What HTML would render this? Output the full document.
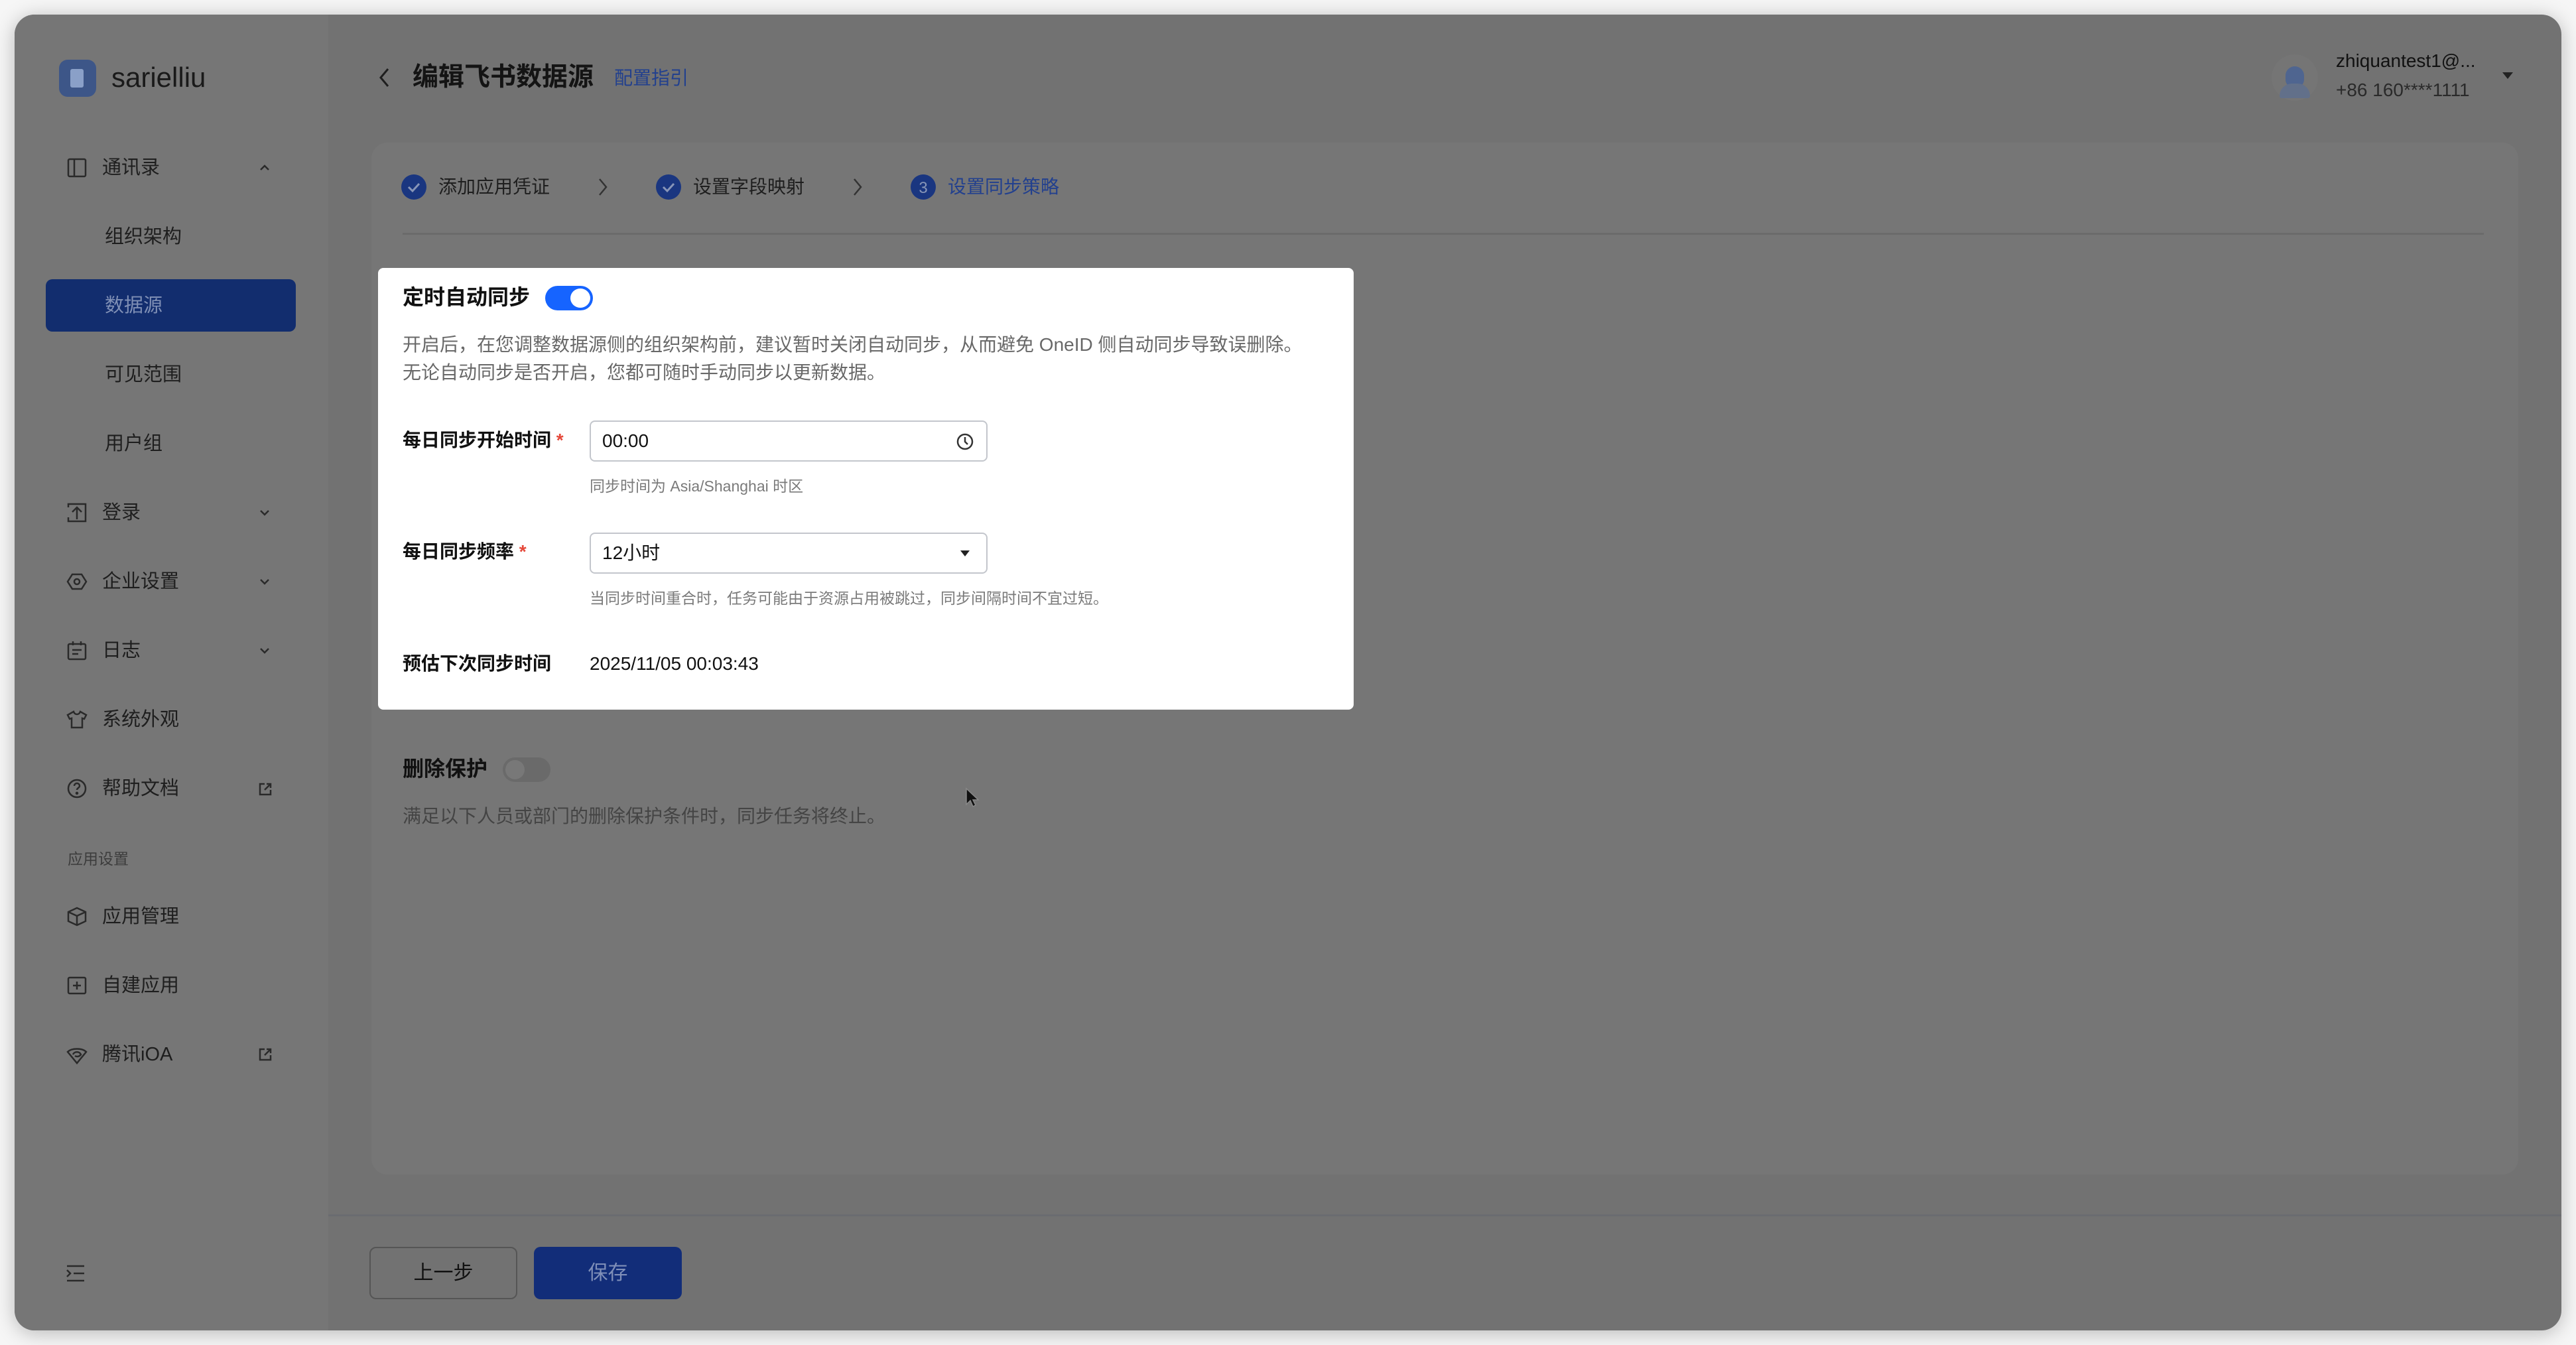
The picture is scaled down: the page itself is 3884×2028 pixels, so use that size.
<!DOCTYPE html>
<html><head><meta charset="utf-8"><style>
*{margin:0;padding:0;box-sizing:border-box}
body{width:3884px;height:2028px;background:#f6f6f6;font-family:"Liberation Sans","Noto Sans CJK SC",sans-serif;position:relative;overflow:hidden}
.a{position:absolute;white-space:nowrap}
.win{position:absolute;left:22px;top:22px;width:3840px;height:1984px;border-radius:30px;background:#727272;overflow:hidden;box-shadow:0 4px 30px rgba(0,0,0,.25)}
.side{position:absolute;left:22px;top:22px;width:473px;height:1984px;background:#767676;border-radius:30px 0 0 30px}
.mi{position:absolute;font-size:29px;color:#1e1e1e;line-height:40px;height:40px}
.ic{position:absolute}
.t28{font-size:28px;line-height:40px;height:40px}
</style></head><body>
<div class="win"></div>
<div class="side"></div>

<!-- logo -->
<div class="a" style="left:89px;top:90px;width:56px;height:56px;border-radius:13px;background:#3d5688"></div>
<div class="a" style="left:106px;top:104px;width:20px;height:28px;background:#8aa0c8;border-radius:3px"></div>
<div class="a" style="left:168px;top:93px;font-size:42px;line-height:48px;color:#1a1a1a">sarielliu</div>

<!-- menu -->
<svg class="ic" style="left:100px;top:237px" width="32" height="32" viewBox="0 0 32 32" fill="none" stroke="#2a2a2a" stroke-width="2.5"><rect x="3" y="3" width="26" height="26" rx="2"/><path d="M12 3v26"/></svg>
<div class="mi" style="left:154px;top:233px">通讯录</div>
<svg class="ic" style="left:389px;top:243px" width="20" height="20" viewBox="0 0 20 20" fill="none" stroke="#2a2a2a" stroke-width="2.5"><path d="M4 13l6-6 6 6"/></svg>
<div class="mi" style="left:158px;top:337px">组织架构</div>
<div class="a" style="left:69px;top:421px;width:377px;height:79px;background:#122d6e;border-radius:10px"></div>
<div class="mi" style="left:158px;top:441px;color:#7f8fb5">数据源</div>
<div class="mi" style="left:158px;top:545px">可见范围</div>
<div class="mi" style="left:158px;top:649px">用户组</div>

<svg class="ic" style="left:100px;top:757px" width="32" height="32" viewBox="0 0 32 32" fill="none" stroke="#2a2a2a" stroke-width="2.5"><path d="M3 8V3h26v26H3v-6M16 26V9M9 15l7-7 7 7"/></svg>
<div class="mi" style="left:154px;top:753px">登录</div>
<svg class="ic" style="left:389px;top:763px" width="20" height="20" viewBox="0 0 20 20" fill="none" stroke="#2a2a2a" stroke-width="2.5"><path d="M4 7l6 6 6-6"/></svg>

<svg class="ic" style="left:100px;top:861px" width="32" height="32" viewBox="0 0 32 32" fill="none" stroke="#2a2a2a" stroke-width="2.5"><path d="M9 5h14l7 11-7 11H9L2 16z"/><circle cx="16" cy="16" r="4"/></svg>
<div class="mi" style="left:154px;top:857px">企业设置</div>
<svg class="ic" style="left:389px;top:867px" width="20" height="20" viewBox="0 0 20 20" fill="none" stroke="#2a2a2a" stroke-width="2.5"><path d="M4 7l6 6 6-6"/></svg>

<svg class="ic" style="left:100px;top:965px" width="32" height="32" viewBox="0 0 32 32" fill="none" stroke="#2a2a2a" stroke-width="2.5"><rect x="3" y="6" width="26" height="23" rx="2"/><path d="M10 2v6M22 2v6M9 15h14M9 21h9"/></svg>
<div class="mi" style="left:154px;top:961px">日志</div>
<svg class="ic" style="left:389px;top:971px" width="20" height="20" viewBox="0 0 20 20" fill="none" stroke="#2a2a2a" stroke-width="2.5"><path d="M4 7l6 6 6-6"/></svg>

<svg class="ic" style="left:100px;top:1069px" width="32" height="32" viewBox="0 0 32 32" fill="none" stroke="#2a2a2a" stroke-width="2.5"><path d="M11 4L2 9l3 6 3-1v14h16V14l3 1 3-6-9-5c-1 3-3 4-5 4s-4-1-5-4z"/></svg>
<div class="mi" style="left:154px;top:1065px">系统外观</div>

<svg class="ic" style="left:100px;top:1173px" width="32" height="32" viewBox="0 0 32 32" fill="none" stroke="#2a2a2a" stroke-width="2.5"><circle cx="16" cy="16" r="13"/><path d="M12 12a4 4 0 118 0c0 3-4 3-4 6"/><circle cx="16" cy="23" r="1" fill="#2a2a2a"/></svg>
<div class="mi" style="left:154px;top:1169px">帮助文档</div>
<svg class="ic" style="left:389px;top:1179px" width="22" height="22" viewBox="0 0 22 22" fill="none" stroke="#2a2a2a" stroke-width="2.5"><path d="M10 3H3v16h16v-7M13 3h6v6M19 3l-9 9"/></svg>

<div class="a" style="left:102px;top:1280px;font-size:23px;line-height:30px;color:#3c3c3c">应用设置</div>

<svg class="ic" style="left:100px;top:1366px" width="32" height="32" viewBox="0 0 32 32" fill="none" stroke="#2a2a2a" stroke-width="2.5"><path d="M16 3l13 6v14l-13 6-13-6V9zM3 9l13 6 13-6M16 15v14"/></svg>
<div class="mi" style="left:154px;top:1362px">应用管理</div>

<svg class="ic" style="left:100px;top:1470px" width="32" height="32" viewBox="0 0 32 32" fill="none" stroke="#2a2a2a" stroke-width="2.5"><rect x="3" y="4" width="26" height="24" rx="2"/><path d="M16 10v12M10 16h12"/></svg>
<div class="mi" style="left:154px;top:1466px">自建应用</div>

<svg class="ic" style="left:100px;top:1574px" width="32" height="32" viewBox="0 0 32 32" fill="none" stroke="#2a2a2a" stroke-width="2.5"><path d="M2 12c6-6 22-6 28 0l-14 17z"/><path d="M10 16c2-5 10-5 12 0-2 3-6 4-9 2"/></svg>
<div class="mi" style="left:154px;top:1570px">腾讯iOA</div>
<svg class="ic" style="left:389px;top:1579px" width="22" height="22" viewBox="0 0 22 22" fill="none" stroke="#2a2a2a" stroke-width="2.5"><path d="M10 3H3v16h16v-7M13 3h6v6M19 3l-9 9"/></svg>

<svg class="ic" style="left:99px;top:1906px" width="30" height="28" viewBox="0 0 30 28" fill="none" stroke="#2a2a2a" stroke-width="2.5"><path d="M2 3h26M12 14h16M2 25h26M2 9l5 5-5 5"/></svg>

<!-- header -->
<svg class="ic" style="left:568px;top:100px" width="24" height="34" viewBox="0 0 24 34" fill="none" stroke="#1e1e1e" stroke-width="3"><path d="M17 4L6 17l11 13"/></svg>
<div class="a" style="left:622px;top:93px;font-size:39px;line-height:48px;font-weight:bold;color:#141414">编辑飞书数据源</div>
<div class="a" style="left:926px;top:99px;font-size:28px;line-height:38px;color:#22408e">配置指引</div>

<div class="a" style="left:3425px;top:82px;width:70px;height:70px;border-radius:50%;background:#757575"></div>
<div class="a" style="left:3446px;top:100px;width:28px;height:32px;border-radius:14px 14px 12px 12px;background:#4f6590"></div>
<div class="a" style="left:3437px;top:126px;width:46px;height:22px;border-radius:23px 23px 4px 4px;background:#62708a"></div>
<div class="a" style="left:3522px;top:74px;font-size:28px;line-height:36px;color:#111">zhiquantest1@...</div>
<div class="a" style="left:3522px;top:118px;font-size:28px;line-height:36px;color:#2a2a2a">+86 160****1111</div>
<svg class="ic" style="left:3772px;top:108px" width="18" height="12" viewBox="0 0 18 12"><path d="M1 1h16L9 11z" fill="#222"/></svg>

<!-- content card -->
<div class="a" style="left:560px;top:215px;width:3237px;height:1556px;background:#767676;border-radius:24px"></div>

<!-- steps -->
<svg class="ic" style="left:605px;top:263px" width="38" height="38" viewBox="0 0 38 38"><circle cx="19" cy="19" r="19" fill="#1a3680"/><path d="M11 19l6 6 10-11" fill="none" stroke="#8896b8" stroke-width="3"/></svg>
<div class="a t28" style="left:661px;top:262px;color:#1e1e1e">添加应用凭证</div>
<svg class="ic" style="left:899px;top:266px" width="20" height="32" viewBox="0 0 20 32" fill="none" stroke="#333" stroke-width="2.5"><path d="M5 4l10 12-10 12"/></svg>
<svg class="ic" style="left:989px;top:263px" width="38" height="38" viewBox="0 0 38 38"><circle cx="19" cy="19" r="19" fill="#1a3680"/><path d="M11 19l6 6 10-11" fill="none" stroke="#8896b8" stroke-width="3"/></svg>
<div class="a t28" style="left:1045px;top:262px;color:#1e1e1e">设置字段映射</div>
<svg class="ic" style="left:1283px;top:266px" width="20" height="32" viewBox="0 0 20 32" fill="none" stroke="#333" stroke-width="2.5"><path d="M5 4l10 12-10 12"/></svg>
<svg class="ic" style="left:1373px;top:263px" width="38" height="38" viewBox="0 0 38 38"><circle cx="19" cy="19" r="19" fill="#1a3680"/><text x="19" y="28" font-size="24" text-anchor="middle" fill="#8896b8" font-family="Liberation Sans">3</text></svg>
<div class="a t28" style="left:1429px;top:262px;color:#22408e">设置同步策略</div>
<div class="a" style="left:607px;top:351px;width:3138px;height:3px;background:#6b6b6b"></div>

<!-- modal -->
<div class="a" style="left:570px;top:404px;width:1471px;height:666px;background:#fff;border-radius:8px"></div>
<div class="a" style="left:607px;top:428px;font-size:32px;line-height:40px;font-weight:bold;color:#111">定时自动同步</div>
<div class="a" style="left:822px;top:431px;width:72px;height:37px;border-radius:19px;background:#1664ff"></div>
<div class="a" style="left:860px;top:435px;width:30px;height:29px;border-radius:50%;background:#fff"></div>
<div class="a t28" style="left:607px;top:500px;color:#686868">开启后，在您调整数据源侧的组织架构前，建议暂时关闭自动同步，从而避免 OneID 侧自动同步导致误删除。</div>
<div class="a t28" style="left:607px;top:542px;color:#686868">无论自动同步是否开启，您都可随时手动同步以更新数据。</div>

<div class="a t28" style="left:607px;top:644px;font-weight:bold;color:#111">每日同步开始时间 <span style="color:#e5483a">*</span></div>
<div class="a" style="left:889px;top:634px;width:600px;height:62px;border:2px solid #c3c6cc;border-radius:8px"></div>
<div class="a t28" style="left:908px;top:645px;color:#111">00:00</div>
<svg class="ic" style="left:1441px;top:652px" width="28" height="28" viewBox="0 0 28 28" fill="none" stroke="#333" stroke-width="2.5"><circle cx="14" cy="14" r="11"/><path d="M14 7v7l4 4"/></svg>
<div class="a" style="left:889px;top:718px;font-size:23px;line-height:30px;color:#7a7a7a">同步时间为 Asia/Shanghai 时区</div>

<div class="a t28" style="left:607px;top:812px;font-weight:bold;color:#111">每日同步频率 <span style="color:#e5483a">*</span></div>
<div class="a" style="left:889px;top:803px;width:600px;height:62px;border:2px solid #c3c6cc;border-radius:8px"></div>
<div class="a t28" style="left:908px;top:814px;color:#111">12小时</div>
<svg class="ic" style="left:1447px;top:829px" width="16" height="11" viewBox="0 0 16 11"><path d="M1 1h14L8 10z" fill="#222"/></svg>
<div class="a" style="left:889px;top:887px;font-size:23px;line-height:30px;color:#7a7a7a">当同步时间重合时，任务可能由于资源占用被跳过，同步间隔时间不宜过短。</div>

<div class="a t28" style="left:607px;top:981px;font-weight:bold;color:#111">预估下次同步时间</div>
<div class="a t28" style="left:889px;top:981px;color:#111">2025/11/05 00:03:43</div>

<!-- delete protection -->
<div class="a" style="left:607px;top:1139px;font-size:32px;line-height:40px;font-weight:bold;color:#111">删除保护</div>
<div class="a" style="left:758px;top:1142px;width:72px;height:37px;border-radius:19px;background:#6a6a6a"></div>
<div class="a" style="left:762px;top:1146px;width:29px;height:29px;border-radius:50%;background:#787878"></div>
<div class="a t28" style="left:607px;top:1211px;color:#444">满足以下人员或部门的删除保护条件时，同步任务将终止。</div>
<svg class="ic" style="left:1455px;top:1187px" width="22" height="32" viewBox="0 0 22 32"><path d="M2 2v24l6-6 4 9 4-2-4-8h8z" fill="#111" stroke="#888" stroke-width="1.5"/></svg>

<!-- footer -->
<div class="a" style="left:495px;top:1831px;width:3367px;height:3px;background:#6a6c70"></div>
<div class="a" style="left:557px;top:1880px;width:223px;height:79px;border:2px solid #555;border-radius:10px;font-size:30px;line-height:75px;text-align:center;color:#111">上一步</div>
<div class="a" style="left:805px;top:1880px;width:223px;height:79px;background:#122d79;border-radius:10px;font-size:30px;line-height:79px;text-align:center;color:#7f8fb8">保存</div>
</body></html>
